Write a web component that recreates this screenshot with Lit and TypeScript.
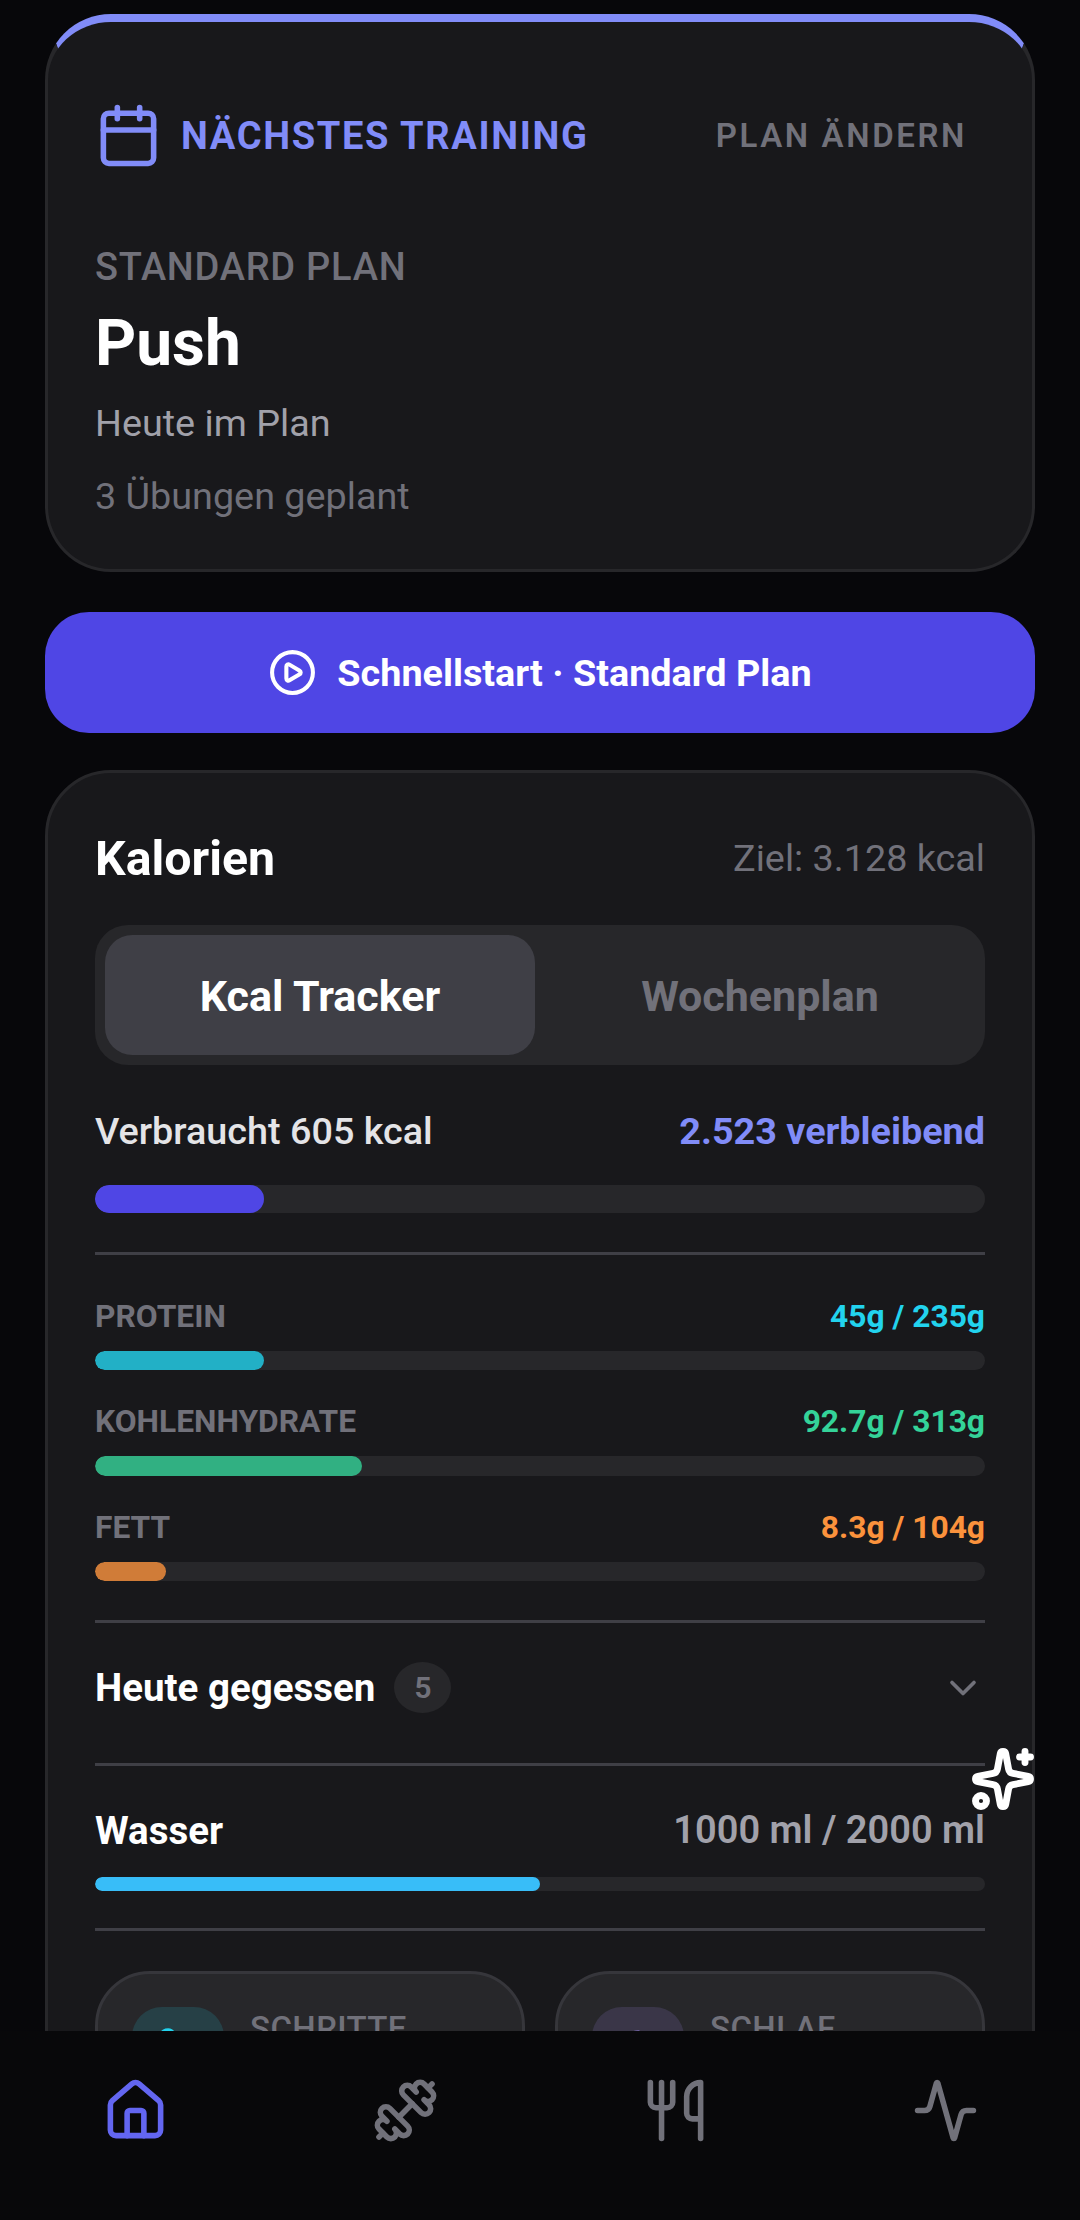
import { LitElement, html, css, svg } from "lit";
import { customElement } from "lit/decorators.js";

const icon = (size: number, cls: string, body: unknown, sw = 2) => html`<svg class=${cls} width=${size} height=${size} viewBox="0 0 24 24" fill="none" stroke="currentColor" stroke-width=${sw} stroke-linecap="round" stroke-linejoin="round">${body}</svg>`;

const calendar = svg`<path d="M8 2v4"/><path d="M16 2v4"/><rect width="18" height="18" x="3" y="4" rx="2"/><path d="M3 10h18"/>`;
const play = svg`<path d="M9 9.003a1 1 0 0 1 1.517-.859l4.997 2.997a1 1 0 0 1 0 1.718l-4.997 2.997A1 1 0 0 1 9 14.996z"/><circle cx="12" cy="12" r="10"/>`;
const chevron = svg`<path d="m6 9 6 6 6-6"/>`;
const sparkles = svg`<path d="M11.017 2.814a1 1 0 0 1 1.966 0l1.051 5.558a2 2 0 0 0 1.594 1.594l5.558 1.051a1 1 0 0 1 0 1.966l-5.558 1.051a2 2 0 0 0-1.594 1.594l-1.051 5.558a1 1 0 0 1-1.966 0l-1.051-5.558a2 2 0 0 0-1.594-1.594l-5.558-1.051a1 1 0 0 1 0-1.966l5.558-1.051a2 2 0 0 0 1.594-1.594z"/><path d="M20 2v4"/><path d="M22 4h-4"/><circle cx="4" cy="20" r="2"/>`;
const house = svg`<path d="M15 21v-8a1 1 0 0 0-1-1h-4a1 1 0 0 0-1 1v8"/><path d="M3 10a2 2 0 0 1 .709-1.528l7-5.999a2 2 0 0 1 2.582 0l7 5.999A2 2 0 0 1 21 10v9a2 2 0 0 1-2 2H5a2 2 0 0 1-2-2z"/>`;
const dumbbell = svg`<path d="M17.596 12.768a2 2 0 1 0 2.829-2.829l-1.768-1.767a2 2 0 0 0 2.828-2.829l-2.828-2.828a2 2 0 0 0-2.829 2.828l-1.767-1.768a2 2 0 1 0-2.829 2.829z"/><path d="m2.5 21.5 1.4-1.4"/><path d="m20.1 3.9 1.4-1.4"/><path d="M5.343 21.485a2 2 0 1 0 2.829-2.828l1.767 1.768a2 2 0 1 0 2.829-2.829l-6.364-6.364a2 2 0 1 0-2.829 2.829l1.768 1.767a2 2 0 0 0-2.828 2.829z"/><path d="m9.6 14.4 4.8-4.8"/>`;
const utensils = svg`<path d="M3 2v7c0 1.1.9 2 2 2h4a2 2 0 0 0 2-2V2"/><path d="M7 2v20"/><path d="M21 15V2a5 5 0 0 0-5 5v6c0 1.1.9 2 2 2h3Zm0 0v7"/>`;
const activity = svg`<path d="M22 12h-2.48a2 2 0 0 0-1.93 1.46l-2.35 8.36a.25.25 0 0 1-.48 0L9.24 2.18a.25.25 0 0 0-.48 0l-2.35 8.36A2 2 0 0 1 4.49 12H2"/>`;
const footprints = svg`<path d="M4 16v-2.38C4 11.5 2.97 10.5 3 8c.03-2.72 1.49-6 4.5-6C9.37 2 10 3.8 10 5.5c0 3.11-2 5.97-2 8.5V16Z"/><path d="M20 20v-2.38c0-2.12 1.03-3.12 1-5.62-.03-2.72-1.49-6-4.5-6C14.63 6 14 7.8 14 9.5c0 3.11 2 5.97 2 8.5v2Z"/><path d="M16 17h4"/><path d="M4 13h4"/>`;
const moon = svg`<path d="M12 3a6 6 0 0 0 9 9 9 9 0 1 1-9-9Z"/>`;

const macros = [
  { name: "PROTEIN", value: "45g / 235g", text: "#22d3ee", pct: 19 },
  { name: "KOHLENHYDRATE", value: "92.7g / 313g", text: "#34d399", pct: 30 },
  { name: "FETT", value: "8.3g / 104g", text: "#fb923c", pct: 8 },
];

@customElement("app-root")
export class AppRoot extends LitElement {
  static styles = css`
    :host {
      display: block;
      position: relative;
      width: 1080px;
      height: 2220px;
      overflow: hidden;
      background: #07070a;
      font-family: Roboto, "Liberation Sans", sans-serif;
      color: #fff;
    }
    * { box-sizing: border-box; }
    .page { padding: 14px 45px 0; }
    .card {
      background: #18181b;
      border: 3px solid #27272a;
      border-radius: 66px;
      padding: 0 47px;
    }
    .next { border-top: 8px solid #818cf8; height: 558px; padding-top: 80px; }
    .next-head { display: flex; align-items: center; justify-content: space-between; height: 67px; }
    .next-title { display: flex; align-items: center; gap: 19px; color: #818cf8; font-size: 38px; font-weight: 700; letter-spacing: 1.65px; }
    .next-title svg { flex: none; }
    .change { color: #71717a; font-size: 33px; font-weight: 600; letter-spacing: 2.6px; padding-right: 18px; }
    .plan { margin-top: 76px; line-height: 44px; font-size: 38px; font-weight: 500; color: #71717a; letter-spacing: .75px; }
    .push { margin-top: 17px; line-height: 76px; font-size: 64px; font-weight: 700; }
    .today { margin-top: 19px; line-height: 44px; font-size: 37.75px; color: #a1a1aa; }
    .count { margin-top: 29px; line-height: 44px; font-size: 37.75px; color: #71717a; }

    .start {
      margin-top: 40px; height: 121px; border-radius: 44px; background: #4f46e5;
      display: flex; align-items: center; justify-content: center; gap: 20px;
      font-size: 37.75px; font-weight: 700; color: #fff;
    }

    .cal { margin-top: 37px; padding-top: 55px; height: 1400px; }
    .row { display: flex; justify-content: space-between; align-items: center; }
    .cal-head { height: 60px; }
    .cal-title { font-size: 48.25px; font-weight: 700; }
    .goal { font-size: 37.75px; color: #71717a; }
    .seg {
      margin-top: 36.5px; height: 140.5px; padding: 10px; background: #27272a; border-radius: 33px;
      display: grid; grid-template-columns: 1fr 1fr; gap: 10px;
    }
    .seg div { display: flex; align-items: center; justify-content: center; padding-top: 2px; border-radius: 27.5px; font-size: 43px; font-weight: 700; color: #71717a; }
    .seg .on { background: #3f3f46; color: #fff; }
    .used { margin-top: 41px; height: 50px; font-size: 37.75px; }
    .used-l { color: #e4e4e7; font-weight: 500; }
    .used-r { color: #818cf8; font-weight: 700; }
    .bar { background: #27272a; border-radius: 28px; overflow: hidden; }
    .bar i { display: block; height: 100%; border-radius: 28px; }
    .bar-main { margin-top: 29px; height: 28px; }
    .bar-main i { background: #4f46e5; }
    .hr { height: 3px; background: #3f3f46; margin-top: 39px; }
    .macros { margin-top: 39px; display: flex; flex-direction: column; gap: 29.5px; }
    .macro-row { height: 44px; font-size: 31.75px; font-weight: 700; }
    .macro-name { color: #71717a; }
    .macro-bar { margin-top: 12.5px; height: 19.5px; }
    .macro-bar i { opacity: .8; }
    .eaten { height: 51px; margin-top: 39px; margin-bottom: 50px; }
    .eaten-l { display: flex; align-items: center; gap: 19px; font-size: 38.5px; font-weight: 700; }
    .badge { width: 57px; height: 51px; border-radius: 50%; background: #27272a; color: #71717a; font-size: 30.25px; font-weight: 600; display: flex; align-items: center; justify-content: center; }
    .chev { color: #71717a; }
    .eaten + .hr { margin-top: 0; }
    .water { margin-top: 39px; height: 50px; }
    .water-l { font-size: 38.5px; font-weight: 700; }
    .water-r { font-size: 38px; font-weight: 600; color: #a1a1aa; }
    .bar-water { margin-top: 22px; height: 14px; }
    .bar-water i { background: #38bdf8; }
    .bar-water + .hr { margin-top: 37px; }
    .tiles { margin-top: 40px; display: grid; grid-template-columns: 1fr 1fr; gap: 30px; }
    .tile {
      display: flex; gap: 26px; height: 190px; padding: 33px 34px;
      background: #27272a; border: 3px solid #36363b; border-radius: 55px;
    }
    .tile-icon { width: 92px; height: 92px; border-radius: 30px; display: flex; align-items: center; justify-content: center; flex: none; }
    .steps { background: rgba(34,211,238,.15); color: #22d3ee; }
    .sleep { background: rgba(167,139,250,.15); color: #a78bfa; }
    .tile-label { font-size: 33px; font-weight: 500; color: #71717a; letter-spacing: .4px; line-height: 44px; }

    .spark { position: absolute; left: 970px; top: 1746px; color: #fff; display: block; }
    .nav {
      position: absolute; left: 0; right: 0; bottom: 0; height: 189px; background: #08080a;
      display: grid; grid-template-columns: repeat(4, 1fr); justify-items: center; padding-top: 46px;
      color: #71717a;
    }
    .nav .active { color: #6366f1; }
  `;

  render() {
    return html`
      <div class="page">
        <section class="card next">
          <div class="next-head">
            <div class="next-title">${icon(67, "", calendar)}<span>NÄCHSTES TRAINING</span></div>
            <div class="change">PLAN ÄNDERN</div>
          </div>
          <div class="plan">STANDARD PLAN</div>
          <div class="push">Push</div>
          <div class="today">Heute im Plan</div>
          <div class="count">3 Übungen geplant</div>
        </section>

        <div class="start">${icon(49, "", play)}<span>Schnellstart · Standard Plan</span></div>

        <section class="card cal">
          <div class="row cal-head"><span class="cal-title">Kalorien</span><span class="goal">Ziel: 3.128 kcal</span></div>
          <div class="seg"><div class="on">Kcal Tracker</div><div>Wochenplan</div></div>
          <div class="row used"><span class="used-l">Verbraucht 605 kcal</span><span class="used-r">2.523 verbleibend</span></div>
          <div class="bar bar-main"><i style="width:19%"></i></div>
          <div class="hr"></div>
          <div class="macros">
            ${macros.map((m) => html`
              <div>
                <div class="row macro-row"><span class="macro-name">${m.name}</span><span style="color:${m.text}">${m.value}</span></div>
                <div class="bar macro-bar"><i style="width:${m.pct}%;background:${m.text}"></i></div>
              </div>`)}
          </div>
          <div class="hr"></div>
          <div class="row eaten">
            <div class="eaten-l"><span>Heute gegessen</span><span class="badge">5</span></div>
            ${icon(44, "chev", chevron)}
          </div>
          <div class="hr"></div>
          <div class="row water"><span class="water-l">Wasser</span><span class="water-r">1000 ml / 2000 ml</span></div>
          <div class="bar bar-water"><i style="width:50%"></i></div>
          <div class="hr"></div>
          <div class="tiles">
            <div class="tile"><div class="tile-icon steps">${icon(55, "", footprints)}</div><div class="tile-label">SCHRITTE</div></div>
            <div class="tile"><div class="tile-icon sleep">${icon(55, "", moon)}</div><div class="tile-label">SCHLAF</div></div>
          </div>
        </section>
      </div>
      ${icon(66, "spark", sparkles, 2.5)}
      <nav class="nav">
        ${icon(67, "active", house)}
        ${icon(67, "", dumbbell)}
        ${icon(67, "", utensils)}
        ${icon(67, "", activity)}
      </nav>
    `;
  }
}
